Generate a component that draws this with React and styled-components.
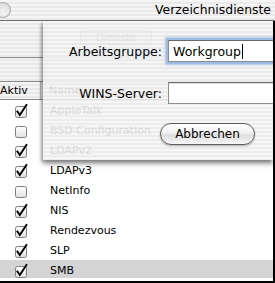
import React from 'react';
import styled, { createGlobalStyle } from 'styled-components';

const GlobalStyle = createGlobalStyle`
  html, body {
    margin: 0;
    padding: 0;
    overflow: hidden;
    background: #fff;
  }
  body {
    font-family: "DejaVu Sans", "Liberation Sans", sans-serif;
    color: #000;
  }
`

const pinstripe = 'repeating-linear-gradient(#f5f5f5 0 2px, #e9e9e9 2px 4px)';

const Window = styled.div`
  width: 275px;
  height: 283px;
  display: flex;
  flex-direction: column;
  overflow: hidden;
`
const TitleBar = styled.div`
  height: 20px;
  flex: none;
  display: flex;
  align-items: center;
  justify-content: space-between;
  background: ${pinstripe};
  border-bottom: 1px solid #6e6e6e;
`
const WinButton = styled.span`
  width: 14px;
  height: 14px;
  margin-left: -5px;
  border-radius: 50%;
  border: 1px solid #a8a8a8;
  background: radial-gradient(circle at 50% 70%, #f4f4f4, #d6d6d6);
`
const Title = styled.div`
  font-size: 12.4px;
  padding-right: 4px;
  line-height: 20px;
`
const Body = styled.div`
  position: relative;
  flex: 1;
  display: flex;
  flex-direction: column;
  border-right: 2px solid #000;
  border-bottom: 2px solid #000;
`
const TabArea = styled.div`
  height: 61px;
  flex: none;
  display: flex;
  flex-direction: column;
  padding-top: 9px;
  box-sizing: border-box;
  background: ${pinstripe};
  border-bottom: 1px solid #8a8a8a;
`
const Tab = styled.div`
  width: 70px;
  height: 13px;
  margin-left: 80px;
  border: 1px solid #9a9a9a;
  border-radius: 3px;
  font-size: 10.5px;
  line-height: 13px;
  text-align: center;
  color: #777;
  background: #e2e2e2;
`
const TabRule = styled.div`
  margin-top: 12px;
  height: 1px;
  background: #8c8c8c;
`
const Header = styled.div`
  height: 17px;
  flex: none;
  display: flex;
  align-items: center;
  background: ${pinstripe};
  border-bottom: 1px solid #8a8a8a;
  font-size: 11px;
`
const ActiveHead = styled.div`
  width: 41px;
  height: 100%;
  box-sizing: border-box;
  border-right: 1px solid #b8b8b8;
  line-height: 17px;
`
const NameHead = styled.div`
  padding-left: 8px;
`
const Row = styled.div`
  height: 20px;
  flex: none;
  display: flex;
  align-items: center;
  font-size: 11px;
  background: ${p => (p.$selected ? 'linear-gradient(#d4d4d4 0 18px, #fff 18px)' : '#fff')};
`
const CheckCell = styled.div`
  width: 50px;
  display: flex;
  padding-left: 14px;
  box-sizing: border-box;
`
const Sheet = styled.div`
  position: absolute;
  top: 0;
  left: 43px;
  right: 0;
  height: 139px;
  display: flex;
  flex-direction: column;
  gap: 20px;
  padding-top: 19px;
  box-sizing: border-box;
  overflow: hidden;
  background: repeating-linear-gradient(rgba(245,245,245,0.9) 0 2px, rgba(234,234,234,0.9) 2px 4px);
  box-shadow: -2px 2px 3px rgba(0,0,0,0.25), 0 4px 5px rgba(0,0,0,0.35);
`
const FieldRow = styled.div`
  display: flex;
  align-items: center;
  gap: 6px;
  height: 22px;
`
const Label = styled.div`
  width: 119px;
  text-align: right;
  font-size: 12.5px;
  line-height: 13px;
  padding-top: 1px;
`
const Field = styled.div`
  flex: 1;
  margin-right: -20px;
  height: 22px;
  box-sizing: border-box;
  display: flex;
  align-items: center;
  padding-left: 4px;
  font-size: 12.5px;
  background: #fff;
  border: 1px solid #8e8e8e;
  border-top-color: #6a6a6a;
  box-shadow: ${p => (p.$focused ? '0 0 0 2px #9cbbe6, 0 0 2px 3px rgba(120,160,220,0.5)' : 'inset 0 1px 1px rgba(0,0,0,0.15)')};
`
const Caret = styled.span`
  width: 1px;
  height: 15px;
  margin-left: 1px;
  background: #000;
`
const ButtonRow = styled.div`
  display: flex;
  padding-left: 117px;
  margin-top: -1px;
`
const Button = styled.div`
  width: 95px;
  height: 22px;
  box-sizing: border-box;
  border: 1px solid #5e5e5e;
  border-radius: 11px;
  font-size: 12px;
  line-height: 20px;
  text-align: center;
  background: linear-gradient(#ffffff, #f0f0f0 45%, #dedede 55%, #f6f6f6);
  box-shadow: 0 1px 2px rgba(0,0,0,0.3);
`

const CheckBox = ({ checked }) => (
  <svg width="15" height="15" viewBox="0 0 15 15">
    <defs>
      <linearGradient id="cb" x1="0" y1="0" x2="0" y2="1">
        <stop offset="0" stopColor="#ffffff" />
        <stop offset="1" stopColor="#e2e2e2" />
      </linearGradient>
    </defs>
    <rect x="1.5" y="3.5" width="11" height="11" rx="2" fill="url(#cb)" stroke="#7e7e7e" />
    {checked && (
      <path d="M3.4 8.6 L5.8 12 L12.4 2" fill="none" stroke="#000" strokeWidth="1.9" strokeLinecap="square" />
    )}
  </svg>
)

const services = [
  ['AppleTalk', true],
  ['BSD Configuration', false],
  ['LDAPv2', true],
  ['LDAPv3', true],
  ['NetInfo', false],
  ['NIS', true],
  ['Rendezvous', true],
  ['SLP', true],
  ['SMB', true],
];

const App = () => {
  return (
    <>
      <GlobalStyle />
      <Window>
        <TitleBar>
          <WinButton />
          <Title>Verzeichnisdienste</Title>
        </TitleBar>
        <Body>
          <TabArea>
            <Tab>Dienste</Tab>
            <TabRule />
          </TabArea>
          <Header>
            <ActiveHead>Aktiv</ActiveHead>
            <NameHead>Name</NameHead>
          </Header>
          {services.map(([name, on], i) => (
            <Row key={name} $selected={i === services.length - 1}>
              <CheckCell>
                <CheckBox checked={on} />
              </CheckCell>
              {name}
            </Row>
          ))}
          <Sheet>
            <FieldRow>
              <Label>Arbeitsgruppe:</Label>
              <Field $focused>
                Workgroup<Caret />
              </Field>
            </FieldRow>
            <FieldRow>
              <Label>WINS-Server:</Label>
              <Field />
            </FieldRow>
            <ButtonRow>
              <Button>Abbrechen</Button>
            </ButtonRow>
          </Sheet>
        </Body>
      </Window>
    </>
  );
};

export default App;
